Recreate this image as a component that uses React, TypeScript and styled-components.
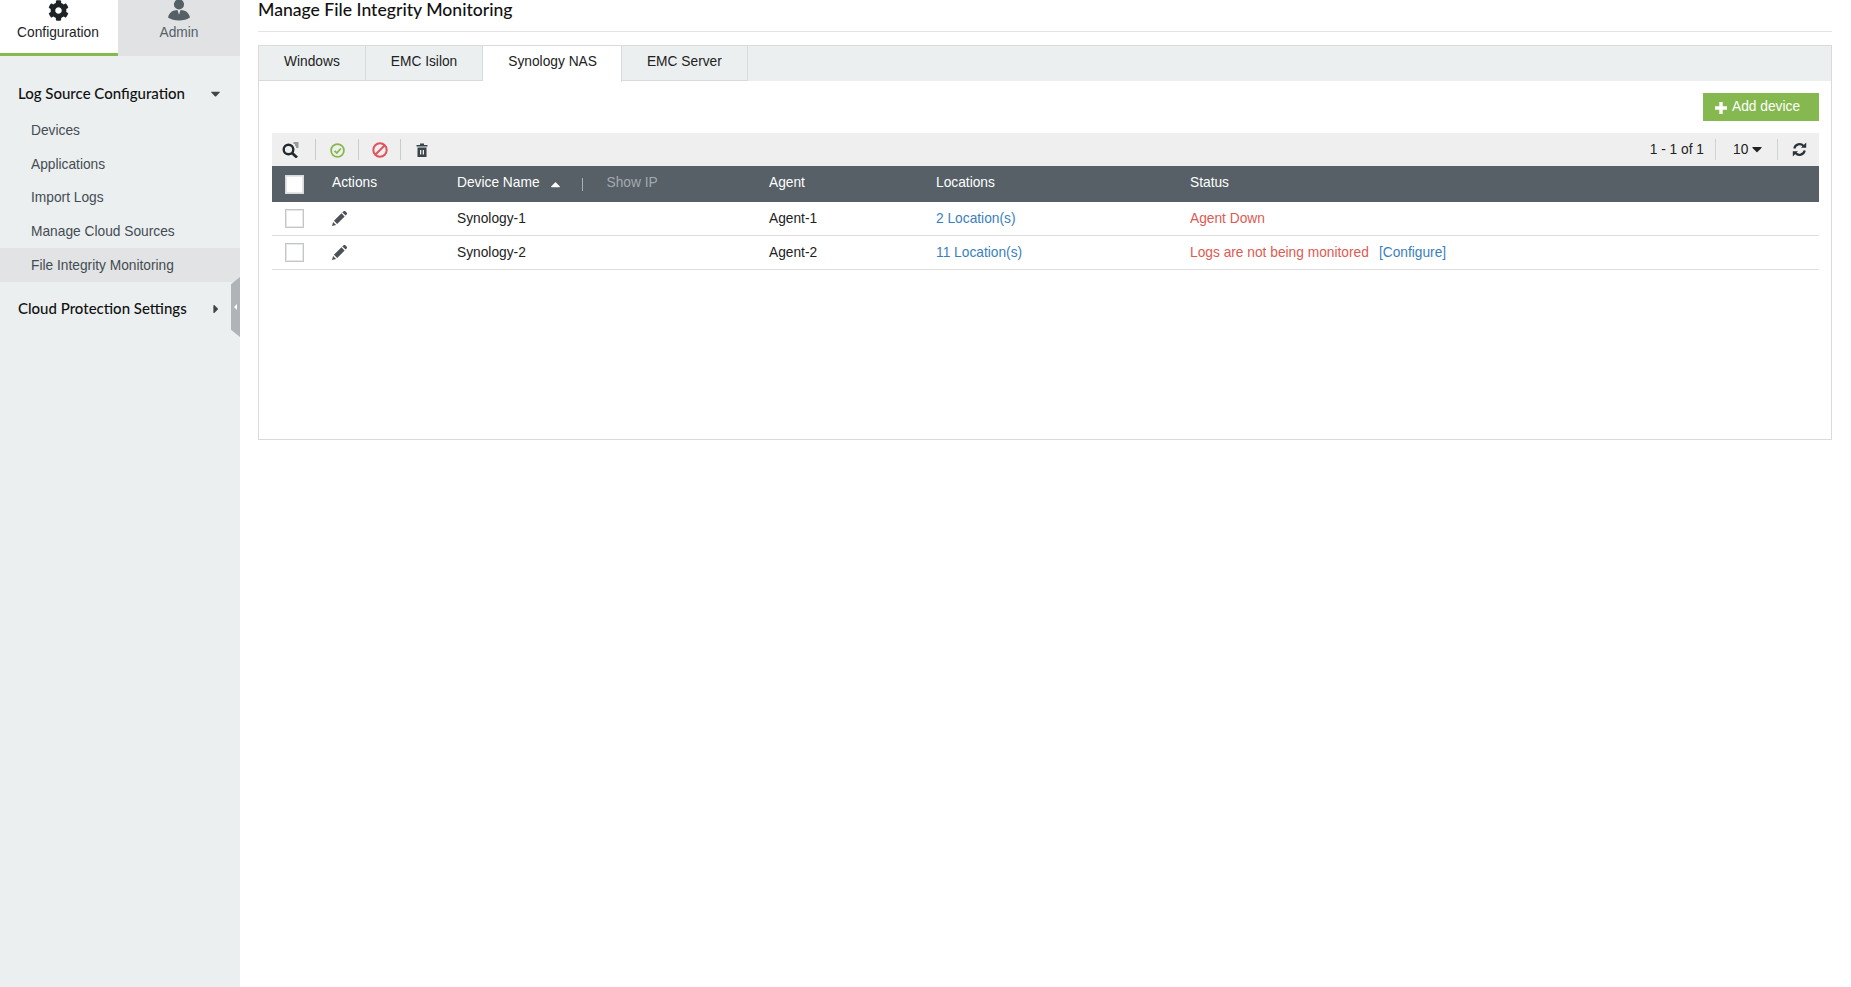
import React from "react";
import styled, { createGlobalStyle } from "styled-components";
import { FaCog, FaCaretDown, FaCaretRight, FaCaretUp } from "react-icons/fa";

const GlobalStyle = createGlobalStyle`
  html, body { margin: 0; padding: 0; background: #fff; }
  body { font-family: "Liberation Sans", Arial, sans-serif; font-size: 13.75px; color: #222; }
`;

const devices = [
  { name: "Synology-1", agent: "Agent-1", locations: "2 Location(s)", status: "Agent Down", configure: false },
  { name: "Synology-2", agent: "Agent-2", locations: "11 Location(s)", status: "Logs are not being monitored", configure: true },
];

const menu = ["Devices", "Applications", "Import Logs", "Manage Cloud Sources", "File Integrity Monitoring"];
const tabs = ["Windows", "EMC Isilon", "Synology NAS", "EMC Server"];

function AdminIcon() {
  return (
    <svg width="22" height="22" viewBox="0 0 20 20" fill="#555f66">
      <circle cx="10" cy="4" r="4.600" />
      <path d="M5.500 9.500 L8.600 9.200 L10 13.500 L11.400 9.200 L14.500 9.500 C17.500 10.500 19.500 13 20 16 C15 19.500 5 19.500 0 16 C.5 13 2.500 10.500 5.500 9.500Z" />
    </svg>
  );
}

function SearchIcon() {
  return (
    <svg width="17" height="16" viewBox="0 0 17 16">
      <circle cx="6.500" cy="7.500" r="4.800" fill="none" stroke="#222a30" strokeWidth="2.400" />
      <path d="M10 11 L15 15.500" stroke="#222a30" strokeWidth="2.800" />
      <path d="M11.500 1 H16.500 M13 3 H16.500 M14 5 H16.500" stroke="#444" strokeWidth="1" />
    </svg>
  );
}

function CheckIcon() {
  return (
    <svg width="15" height="15" viewBox="0 0 15 15" fill="none">
      <circle cx="7.500" cy="7.500" r="6.400" stroke="#85b84f" strokeWidth="1.800" />
      <path d="M4.500 7.800 L6.800 10 L10.800 5.500" stroke="#85b84f" strokeWidth="1.800" />
    </svg>
  );
}

function BanIcon() {
  return (
    <svg width="16" height="16" viewBox="0 0 16 16" fill="none">
      <circle cx="8" cy="8" r="6.700" stroke="#e0525c" strokeWidth="2" />
      <path d="M3.500 12.500 L12.500 3.500" stroke="#e0525c" strokeWidth="2" />
    </svg>
  );
}

function TrashIcon() {
  return (
    <svg width="12" height="14" viewBox="0 0 12 14" fill="#3a4349">
      <path d="M0.500 2 H4 V0.500 H8 V2 H11.500 V3.500 H0.500Z" />
      <path fillRule="evenodd" d="M1.500 4.500 H10.500 V14 H1.500Z M4 7 V11.500 H5.300 V7Z M6.700 7 V11.500 H8 V7Z" />
    </svg>
  );
}

function PlusIcon() {
  return (
    <svg width="12" height="12" viewBox="0 0 12 12" fill="#fff">
      <path d="M4.300 0 H7.700 V4.300 H12 V7.700 H7.700 V12 H4.300 V7.700 H0 V4.300 H4.300Z" />
    </svg>
  );
}

function RefreshIcon() {
  return (
    <svg width="15" height="15" viewBox="0 0 15 15" fill="none">
      <path d="M2.300 6.500 A5.300 5.300 0 0 1 11.500 4" stroke="#2b3237" strokeWidth="2.200" />
      <path d="M12.700 8.500 A5.300 5.300 0 0 1 3.500 11" stroke="#2b3237" strokeWidth="2.200" />
      <path d="M9 5.800 H14.200 V0.600Z M6 9.200 H0.800 V14.400Z" fill="#2b3237" />
    </svg>
  );
}

function PencilIcon() {
  return (
    <svg width="15" height="15" viewBox="0 0 14 14" fill="#4a5257">
      <path d="M0 14 L1 10.200 L3.800 13Z" />
      <path d="M1.800 9.200 L8.800 2.200 L11.800 5.200 L4.800 12.200Z" />
      <path d="M9.700 1.300 L11 0 C11.500 -.3 12 -.2 12.400 .2 L13.800 1.600 C14.200 2 14.200 2.500 13.900 3 L12.700 4.300Z" />
    </svg>
  );
}

export default function App() {
  return (
    <>
      <GlobalStyle />
      <Page>
        <Sidebar>
          <TopTabs>
            <TopTab $active>
              <FaCog size={21} color="#1d2226" />
              <span>Configuration</span>
            </TopTab>
            <TopTab>
              <AdminIcon />
              <span>Admin</span>
            </TopTab>
          </TopTabs>
          <Menu>
            <MenuHead>
              Log Source Configuration
              <FaCaretDown size={15} color="#444" />
            </MenuHead>
            <SubList>
              {menu.map((m) => (
                <SubItem key={m} $active={m === "File Integrity Monitoring"}>{m}</SubItem>
              ))}
            </SubList>
            <MenuHead $second>
              Cloud Protection Settings
              <CaretDrop><FaCaretRight size={14} color="#444" /></CaretDrop>
            </MenuHead>
          </Menu>
          <Handle>
            <HandleArrow />
          </Handle>
        </Sidebar>
        <Main>
          <Title>Manage File Integrity Monitoring</Title>
          <Panel>
            <TabBar>
              {tabs.map((t) => (
                <Tab key={t} $active={t === "Synology NAS"}>{t}</Tab>
              ))}
            </TabBar>
            <PanelBody>
              <ButtonRow>
                <AddButton>
                  <PlusIcon />
                  Add device
                </AddButton>
              </ButtonRow>
              <Toolbar>
                <ToolGroup>
                  <ToolIcon><SearchIcon /></ToolIcon>
                  <ToolIcon><CheckIcon /></ToolIcon>
                  <ToolIcon><BanIcon /></ToolIcon>
                  <ToolIcon $last><TrashIcon /></ToolIcon>
                </ToolGroup>
                <Pager>
                  <PagerText>1 - 1 of 1</PagerText>
                  <PageSize>10 <FaCaretDown size={16} color="#222" /></PageSize>
                  <Refresh><RefreshIcon /></Refresh>
                </Pager>
              </Toolbar>
              <HeaderRow>
                <CheckCell><HeadCheck /></CheckCell>
                <HeadCell>Actions</HeadCell>
                <HeadCell>
                  Device Name
                  <SortIcon><FaCaretUp size={15} color="#fff" /></SortIcon>
                  <HeadSep />
                  <ShowIp>Show IP</ShowIp>
                </HeadCell>
                <HeadCell>Agent</HeadCell>
                <HeadCell>Locations</HeadCell>
                <HeadCell>Status</HeadCell>
              </HeaderRow>
              {devices.map((d) => (
                <Row key={d.name}>
                  <CheckCell><RowCheck /></CheckCell>
                  <Cell><PencilIcon /></Cell>
                  <Cell>{d.name}</Cell>
                  <Cell>{d.agent}</Cell>
                  <LinkCell>{d.locations}</LinkCell>
                  <StatusCell>
                    {d.status}
                    {d.configure && <ConfigureLink>[Configure]</ConfigureLink>}
                  </StatusCell>
                </Row>
              ))}
            </PanelBody>
          </Panel>
        </Main>
      </Page>
    </>
  );
}

const Page = styled.div`
  display: flex;
  min-height: 987px;
  width: 1851px;
  overflow: hidden;
`;

const Sidebar = styled.aside`
  position: relative;
  width: 240px;
  flex: none;
  background: #ebeff0;
`;

const TopTabs = styled.div`
  display: flex;
  height: 56px;
`;

const TopTab = styled.div<{ $active?: boolean }>`
  width: ${(p) => (p.$active ? "118px" : "122px")};
  box-sizing: border-box;
  display: flex;
  flex-direction: column;
  align-items: center;
  gap: ${(p) => (p.$active ? "4px" : "3px")};
  padding-right: ${(p) => (p.$active ? "2px" : "0")};
  background: ${(p) => (p.$active ? "#fff" : "#e1e2e4")};
  border-bottom: ${(p) => (p.$active ? "3px solid #85b84f" : "none")};
  color: ${(p) => (p.$active ? "#1d2226" : "#555f66")};
  line-height: 16px;
`;

const Menu = styled.nav`
  padding-top: 27px;
`;

const MenuHead = styled.div<{ $second?: boolean }>`
  display: flex;
  align-items: center;
  justify-content: space-between;
  padding: 0 17px 0 18px;
  height: 20px;
  margin-top: ${(p) => (p.$second ? "16px" : "0")};
  font-family: Lato, sans-serif;
  font-size: 15px;
  font-weight: 500;
  color: #111;
`;

const CaretDrop = styled.span`
  display: flex;
  margin-top: 3px;
`;

const SubList = styled.div`
  margin-top: 10.500px;
  display: flex;
  flex-direction: column;
`;

const SubItem = styled.div<{ $active?: boolean }>`
  height: 33.700px;
  display: flex;
  align-items: center;
  padding-left: 31px;
  color: #444c52;
  background: ${(p) => (p.$active ? "#e1e3e5" : "transparent")};
`;

const Handle = styled.div`
  position: absolute;
  right: 0;
  top: 277px;
  width: 9px;
  height: 60px;
  background: #aeb4b8;
  clip-path: polygon(100% 0, 100% 100%, 0 88%, 0 12%);
  display: flex;
  align-items: center;
  justify-content: center;
`;

const HandleArrow = styled.span`
  width: 0;
  height: 0;
  margin-top: -1px;
  border-top: 3px solid transparent;
  border-bottom: 3px solid transparent;
  border-right: 3px solid #fff;
`;

const Main = styled.main`
  width: 1574px;
  margin-left: 18px;
  flex: none;
`;

const Title = styled.h1`
  margin: 0;
  height: 31px;
  border-bottom: 1px solid #e2e4e5;
  font-family: Lato, sans-serif;
  font-size: 17.600px;
  font-weight: 500;
  line-height: 19px;
  color: #111;
`;

const Panel = styled.section`
  margin-top: 13px;
  height: 395px;
  box-sizing: border-box;
  border: 1px solid #d8dadb;
  display: flex;
  flex-direction: column;
`;

const TabBar = styled.div`
  display: flex;
  height: 35px;
  background: #ebeff0;
`;

const Tab = styled.div<{ $active?: boolean }>`
  padding: 0 ${(p) => (p.$active ? "24px" : "25px")} ${(p) => (p.$active ? "5px" : "3px")} 25px;
  height: ${(p) => (p.$active ? "36px" : "35px")};
  box-sizing: border-box;
  display: flex;
  align-items: center;
  background: ${(p) => (p.$active ? "#fff" : "#ebeff0")};
  border-right: 1px solid #d8dadb;
  border-bottom: ${(p) => (p.$active ? "none" : "1px solid #d8dadb")};
  color: #222;
`;

const PanelBody = styled.div`
  flex: 1;
  padding: 12px 12px 0 13px;
`;

const ButtonRow = styled.div`
  display: flex;
  justify-content: flex-end;
  margin-bottom: 12px;
`;

const AddButton = styled.button`
  width: 116px;
  height: 28px;
  border: none;
  padding: 0 0 2px 12px;
  display: flex;
  align-items: center;
  gap: 5px;
  background: #85b84f;
  color: #fff;
  font: 13.75px "Liberation Sans", Arial, sans-serif;
  svg { margin-top: 3px; }
`;

const Toolbar = styled.div`
  height: 33px;
  display: flex;
  align-items: center;
  justify-content: space-between;
  background: #efefef;
`;

const ToolGroup = styled.div`
  display: flex;
  align-items: center;
`;

const ToolIcon = styled.span<{ $last?: boolean }>`
  width: 42.500px;
  height: 21px;
  box-sizing: border-box;
  display: flex;
  align-items: center;
  justify-content: center;
  padding: 1px 0 0 ${(p) => (p.$last ? "0" : "2px")};
  border-right: ${(p) => (p.$last ? "none" : "1px solid #c9cbcc")};
  &:first-child { width: 44px; padding: 1px 6px 0 0; }
`;

const Pager = styled.div`
  display: flex;
  align-items: center;
  height: 21px;
  color: #222;
`;

const PagerText = styled.span`
  padding-right: 11px;
  border-right: 1px solid #d0d2d3;
  line-height: 21px;
`;

const PageSize = styled.span`
  display: flex;
  align-items: center;
  gap: 1px;
  width: 62px;
  box-sizing: border-box;
  padding-left: 17px;
  margin-top: -1px;
  height: 21px;
  border-right: 1px solid #d0d2d3;
`;

const Refresh = styled.span`
  width: 41px;
  display: flex;
  justify-content: center;
  padding-left: 2px;
  box-sizing: border-box;
`;

const HeaderRow = styled.div`
  display: grid;
  grid-template-columns: 60px 125px 312px 167px 254px 1fr;
  align-items: center;
  height: 36px;
  background: #566066;
  color: #fff;
`;

const Row = styled(HeaderRow)`
  height: 34px;
  box-sizing: border-box;
  background: #fff;
  color: #222;
  border-bottom: 1px solid #dcdedf;
`;

const Cell = styled.div`
  display: flex;
  align-items: center;
`;

const HeadCell = styled(Cell)`
  margin-top: -3px;
`;

const CheckCell = styled.div`
  display: flex;
  padding-left: 13px;
`;

const RowCheck = styled.span`
  width: 19px;
  height: 19px;
  box-sizing: border-box;
  border: 1px solid #c4c6c7;
  box-shadow: inset 0 0 0 1px #e6e7e8;
  background: #fff;
`;

const HeadCheck = styled(RowCheck)`
  border-color: #d8dadb;
`;

const SortIcon = styled.span`
  display: flex;
  margin-left: 8px;
  margin-top: 3px;
`;

const HeadSep = styled.span`
  width: 1px;
  height: 13px;
  margin: 3px 24px 0 19px;
  background: #a9afb3;
`;

const ShowIp = styled.span`
  color: #a4abaf;
`;

const LinkCell = styled(Cell)`
  color: #3a7fbd;
`;

const StatusCell = styled(Cell)`
  color: #dc5a52;
`;

const ConfigureLink = styled.span`
  margin-left: 10px;
  color: #3a7fbd;
`;
